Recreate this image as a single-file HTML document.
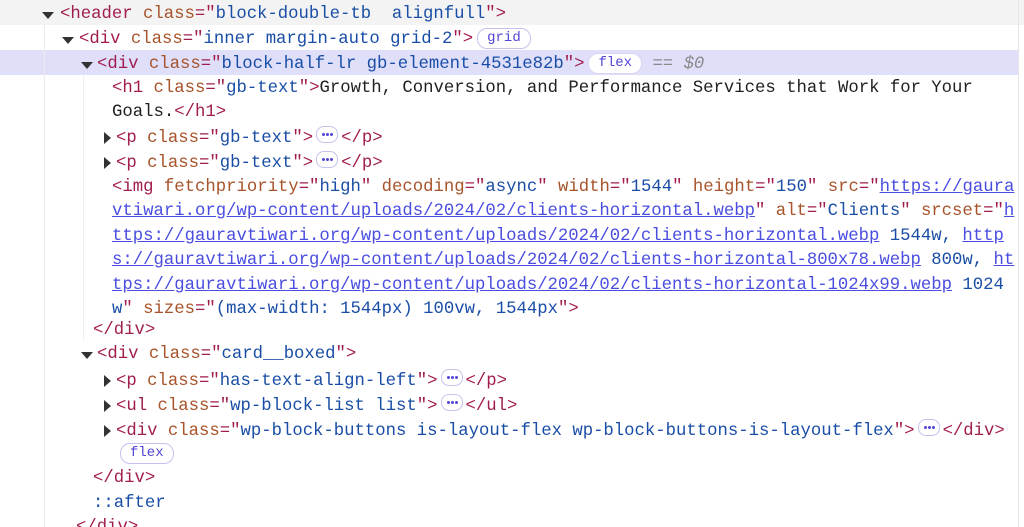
<!DOCTYPE html>
<html><head><meta charset="utf-8"><style>
html,body{margin:0;padding:0;background:#fff;width:1024px;height:527px;overflow:hidden}
body{position:relative;font-family:"Liberation Mono",monospace;font-size:17.3px;color:#1f1f1f}
.r{position:absolute;white-space:pre;height:24px;line-height:24px;margin-top:2px}
.t{color:#a11d4f}.a{color:#a8532a}.v{color:#1a4ea6}.l{color:#4a4de0;text-decoration:underline}
.tri{position:absolute;width:0;height:0;margin-top:2px}
.down{border-left:6px solid transparent;border-right:6px solid transparent;border-top:7px solid #333}
.right{border-top:6px solid transparent;border-bottom:6px solid transparent;border-left:7px solid #333}
.b{display:inline-block;font-family:"Liberation Mono",monospace;font-size:14px;color:#5145d6;border:1px solid #c3c3ef;border-radius:10px;padding:0 9px;line-height:19px;height:19px;vertical-align:2px;background:#fff}
.d{display:inline-block;width:20px;height:15px;border:1px solid #c3c3ef;border-radius:8px;vertical-align:-1px;position:relative;margin:0 3px}
.d:after{content:"";position:absolute;left:5px;top:6px;width:3px;height:3px;border-radius:2px;background:#5145d6;box-shadow:4px 0 #5145d6,8px 0 #5145d6}
.g{color:#8a8a8a}
</style></head><body>
<div style="position:absolute;left:0;top:0;width:1024px;height:25px;background:#f3f3f3"></div>
<div style="position:absolute;left:0;top:50px;width:1018px;height:25px;background:#dfdffa"></div>
<div style="position:absolute;left:44px;top:25px;width:1px;height:502px;background:#ececec"></div>
<div style="position:absolute;left:83px;top:75px;width:1px;height:265px;background:#f0f0f0"></div>
<div style="position:absolute;left:1018px;top:0;width:1px;height:527px;background:#e6e6e6"></div>

<div class="tri down" style="left:42px;top:10px"></div>
<div class="r" style="left:60px;top:1px"><span class="t">&lt;header</span> <span class="a">class</span><span class="t">="</span><span class="v">block-double-tb  alignfull</span><span class="t">"&gt;</span></div>

<div class="tri down" style="left:62px;top:35px"></div>
<div class="r" style="left:79px;top:26px"><span class="t">&lt;div</span> <span class="a">class</span><span class="t">="</span><span class="v">inner margin-auto grid-2</span><span class="t">"&gt;</span><span class="b" style="margin-left:4px">grid</span></div>

<div class="tri down" style="left:81px;top:60px"></div>
<div class="r" style="left:97px;top:51px"><span class="t">&lt;div</span> <span class="a">class</span><span class="t">="</span><span class="v">block-half-lr gb-element-4531e82b</span><span class="t">"&gt;</span><span class="b" style="margin-left:4px;border-color:#d6d6f4">flex</span> <span class="g">== <i>$0</i></span></div>

<div class="r" style="left:112px;top:75px"><span class="t">&lt;h1</span> <span class="a">class</span><span class="t">="</span><span class="v">gb-text</span><span class="t">"&gt;</span>Growth, Conversion, and Performance Services that Work for Your</div>
<div class="r" style="left:112px;top:99px">Goals.<span class="t">&lt;/h1&gt;</span></div>

<div class="tri right" style="left:104px;top:130px"></div>
<div class="r" style="left:116px;top:124px"><span class="t">&lt;p</span> <span class="a">class</span><span class="t">="</span><span class="v">gb-text</span><span class="t">"&gt;</span><span class="d"></span><span class="t">&lt;/p&gt;</span></div>
<div class="tri right" style="left:104px;top:155px"></div>
<div class="r" style="left:116px;top:149px"><span class="t">&lt;p</span> <span class="a">class</span><span class="t">="</span><span class="v">gb-text</span><span class="t">"&gt;</span><span class="d"></span><span class="t">&lt;/p&gt;</span></div>

<div class="r" style="left:112px;top:174px"><span class="t">&lt;img</span> <span class="a">fetchpriority</span><span class="t">="</span><span class="v">high</span><span class="t">"</span> <span class="a">decoding</span><span class="t">="</span><span class="v">async</span><span class="t">"</span> <span class="a">width</span><span class="t">="</span><span class="v">1544</span><span class="t">"</span> <span class="a">height</span><span class="t">="</span><span class="v">150</span><span class="t">"</span> <span class="a">src</span><span class="t">="</span><span class="l">https://gaura</span></div>
<div class="r" style="left:112px;top:198px"><span class="l">vtiwari.org/wp-content/uploads/2024/02/clients-horizontal.webp</span><span class="t">"</span> <span class="a">alt</span><span class="t">="</span><span class="v">Clients</span><span class="t">"</span> <span class="a">srcset</span><span class="t">="</span><span class="l">h</span></div>
<div class="r" style="left:112px;top:223px"><span class="l">ttps://gauravtiwari.org/wp-content/uploads/2024/02/clients-horizontal.webp</span><span class="v"> 1544w, </span><span class="l">http</span></div>
<div class="r" style="left:112px;top:247px"><span class="l">s://gauravtiwari.org/wp-content/uploads/2024/02/clients-horizontal-800x78.webp</span><span class="v"> 800w, </span><span class="l">ht</span></div>
<div class="r" style="left:112px;top:272px"><span class="l">tps://gauravtiwari.org/wp-content/uploads/2024/02/clients-horizontal-1024x99.webp</span><span class="v"> 1024</span></div>
<div class="r" style="left:112px;top:296px"><span class="v">w</span><span class="t">"</span> <span class="a">sizes</span><span class="t">="</span><span class="v">(max-width: 1544px) 100vw, 1544px</span><span class="t">"&gt;</span></div>

<div class="r" style="left:93px;top:317px"><span class="t">&lt;/div&gt;</span></div>

<div class="tri down" style="left:81px;top:350px"></div>
<div class="r" style="left:97px;top:341px"><span class="t">&lt;div</span> <span class="a">class</span><span class="t">="</span><span class="v">card__boxed</span><span class="t">"&gt;</span></div>

<div class="tri right" style="left:104px;top:373px"></div>
<div class="r" style="left:116px;top:367px"><span class="t">&lt;p</span> <span class="a">class</span><span class="t">="</span><span class="v">has-text-align-left</span><span class="t">"&gt;</span><span class="d"></span><span class="t">&lt;/p&gt;</span></div>
<div class="tri right" style="left:104px;top:398px"></div>
<div class="r" style="left:116px;top:392px"><span class="t">&lt;ul</span> <span class="a">class</span><span class="t">="</span><span class="v">wp-block-list list</span><span class="t">"&gt;</span><span class="d"></span><span class="t">&lt;/ul&gt;</span></div>
<div class="tri right" style="left:104px;top:423px"></div>
<div class="r" style="left:116px;top:417px"><span class="t">&lt;div</span> <span class="a">class</span><span class="t">="</span><span class="v">wp-block-buttons is-layout-flex wp-block-buttons-is-layout-flex</span><span class="t">"&gt;</span><span class="d"></span><span class="t">&lt;/div&gt;</span></div>
<div class="r" style="left:120px;top:441px"><span class="b">flex</span></div>

<div class="r" style="left:93px;top:465px"><span class="t">&lt;/div&gt;</span></div>
<div class="r" style="left:93px;top:490px"><span class="v">::after</span></div>
<div class="r" style="left:76px;top:514px"><span class="t">&lt;/div&gt;</span></div>
</body></html>
